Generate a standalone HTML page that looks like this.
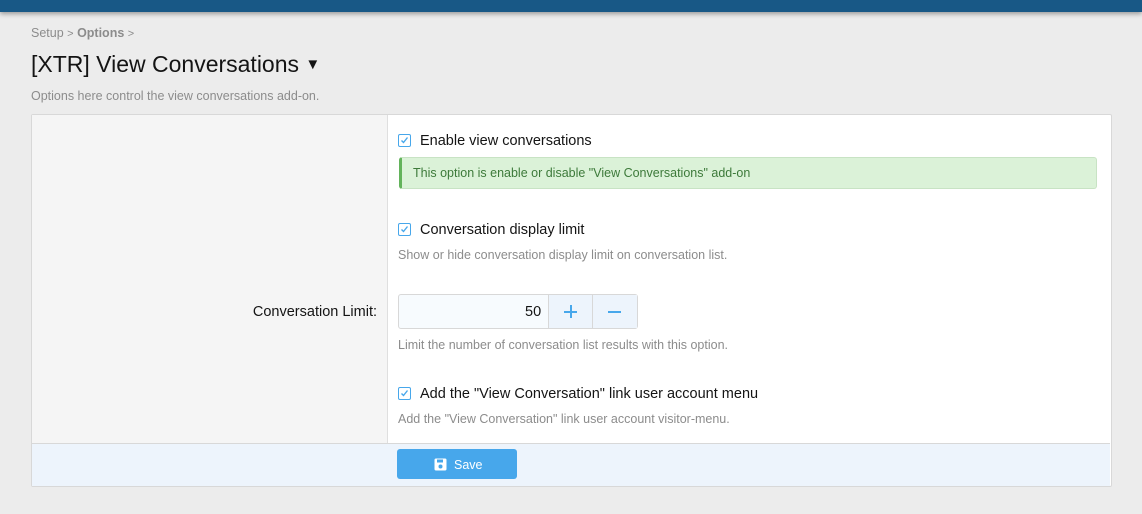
<!DOCTYPE html>
<html><head><style>
body{margin:0;width:1142px;height:514px;background:#ececec;font-family:"Liberation Sans",sans-serif;position:relative;overflow:hidden;color:#141414}
.a{position:absolute;white-space:nowrap}
.top{left:0;top:0;width:1142px;height:12px;background:#185886;box-shadow:0 2px 5px rgba(0,0,0,.35)}
.panel{left:31px;top:114px;width:1079px;height:371px;background:#fff;border:1px solid #d8d8d8;border-radius:2px}
.left{left:32px;top:115px;width:355px;height:328px;background:#f5f5f5;border-right:1px solid #dfdfdf}
.foot{left:32px;top:443px;width:1078px;height:42px;background:#edf4fc;border-top:1px solid #d8d8d8}
.cb{width:11px;height:11px;border:1px solid #47a7eb;border-radius:2px;background:#fff}
.cb svg{position:absolute;left:1px;top:1px}
.lbl{font-size:14.5px;color:#141414}
.hint{font-size:12.5px;color:#8c8c8c}
</style></head><body>
<div class="a top"></div>
<div class="a" style="left:31px;top:26px;font-size:12.5px;color:#8c8c8c">Setup <span style="font-size:11px">&gt;</span> <b style="color:#8c8c8c">Options</b> <span style="font-size:11px">&gt;</span></div>
<div class="a" style="left:31px;top:51px;font-size:23px;color:#141414">[XTR] View Conversations <span style="font-size:15px;position:relative;top:-3px">&#9660;</span></div>
<div class="a" style="left:31px;top:89px;font-size:12.5px;color:#8c8c8c">Options here control the view conversations add-on.</div>
<div class="a panel"></div>
<div class="a left"></div>
<div class="a foot"></div>

<div class="a cb" style="left:398px;top:134px"><svg width="9" height="9" viewBox="0 0 9 9"><path d="M1.5 4.5l2 2 4-5" stroke="#47a7eb" stroke-width="1.4" fill="none"/></svg></div>
<div class="a lbl" style="left:420px;top:133px">Enable view conversations</div>
<div class="a" style="left:399px;top:157px;width:694px;height:30px;background:#dbf2d8;border:1px solid #c8e3c4;border-left:3px solid #63b35b;border-radius:3px"></div>
<div class="a" style="left:413px;top:166px;font-size:12.5px;color:#3d7a3a">This option is enable or disable "View Conversations" add-on</div>

<div class="a cb" style="left:398px;top:223px"><svg width="9" height="9" viewBox="0 0 9 9"><path d="M1.5 4.5l2 2 4-5" stroke="#47a7eb" stroke-width="1.4" fill="none"/></svg></div>
<div class="a lbl" style="left:420px;top:222px">Conversation display limit</div>
<div class="a hint" style="left:398px;top:248px">Show or hide conversation display limit on conversation list.</div>

<div class="a lbl" style="right:765px;top:304px">Conversation Limit:</div>
<div class="a" style="left:398px;top:294px;width:238px;height:33px;border:1px solid #d8d8d8;border-radius:3px;background:#f7fbfe"></div>
<div class="a" style="left:548px;top:295px;width:88px;height:33px;background:#edf4fc;border-left:1px solid #d8d8d8"></div>
<div class="a" style="left:592px;top:295px;width:1px;height:33px;background:#d8d8d8"></div>
<div class="a lbl" style="left:525px;top:304px">50</div>
<div class="a" style="left:564px;top:311px;width:13px;height:2px;background:#47a7eb"></div>
<div class="a" style="left:569.5px;top:305px;width:2px;height:13px;background:#47a7eb"></div>
<div class="a" style="left:608px;top:311px;width:13px;height:2px;background:#47a7eb"></div>
<div class="a hint" style="left:398px;top:338px">Limit the number of conversation list results with this option.</div>

<div class="a cb" style="left:398px;top:387px"><svg width="9" height="9" viewBox="0 0 9 9"><path d="M1.5 4.5l2 2 4-5" stroke="#47a7eb" stroke-width="1.4" fill="none"/></svg></div>
<div class="a lbl" style="left:420px;top:386px">Add the "View Conversation" link user account menu</div>
<div class="a hint" style="left:398px;top:412px">Add the "View Conversation" link user account visitor-menu.</div>

<div class="a" style="left:397px;top:449px;width:120px;height:30px;background:#47a7eb;border-radius:3px"></div>
<svg class="a" style="left:434px;top:458px" width="13" height="13" viewBox="0 0 13 13"><rect x="0.5" y="0.5" width="12" height="12" rx="1.5" fill="#fff"/><rect x="3" y="1.5" width="6" height="3" fill="#47a7eb"/><circle cx="6.5" cy="8.5" r="2" fill="#47a7eb"/></svg>
<div class="a" style="left:454px;top:458px;font-size:12.5px;color:#fff">Save</div>
</body></html>
